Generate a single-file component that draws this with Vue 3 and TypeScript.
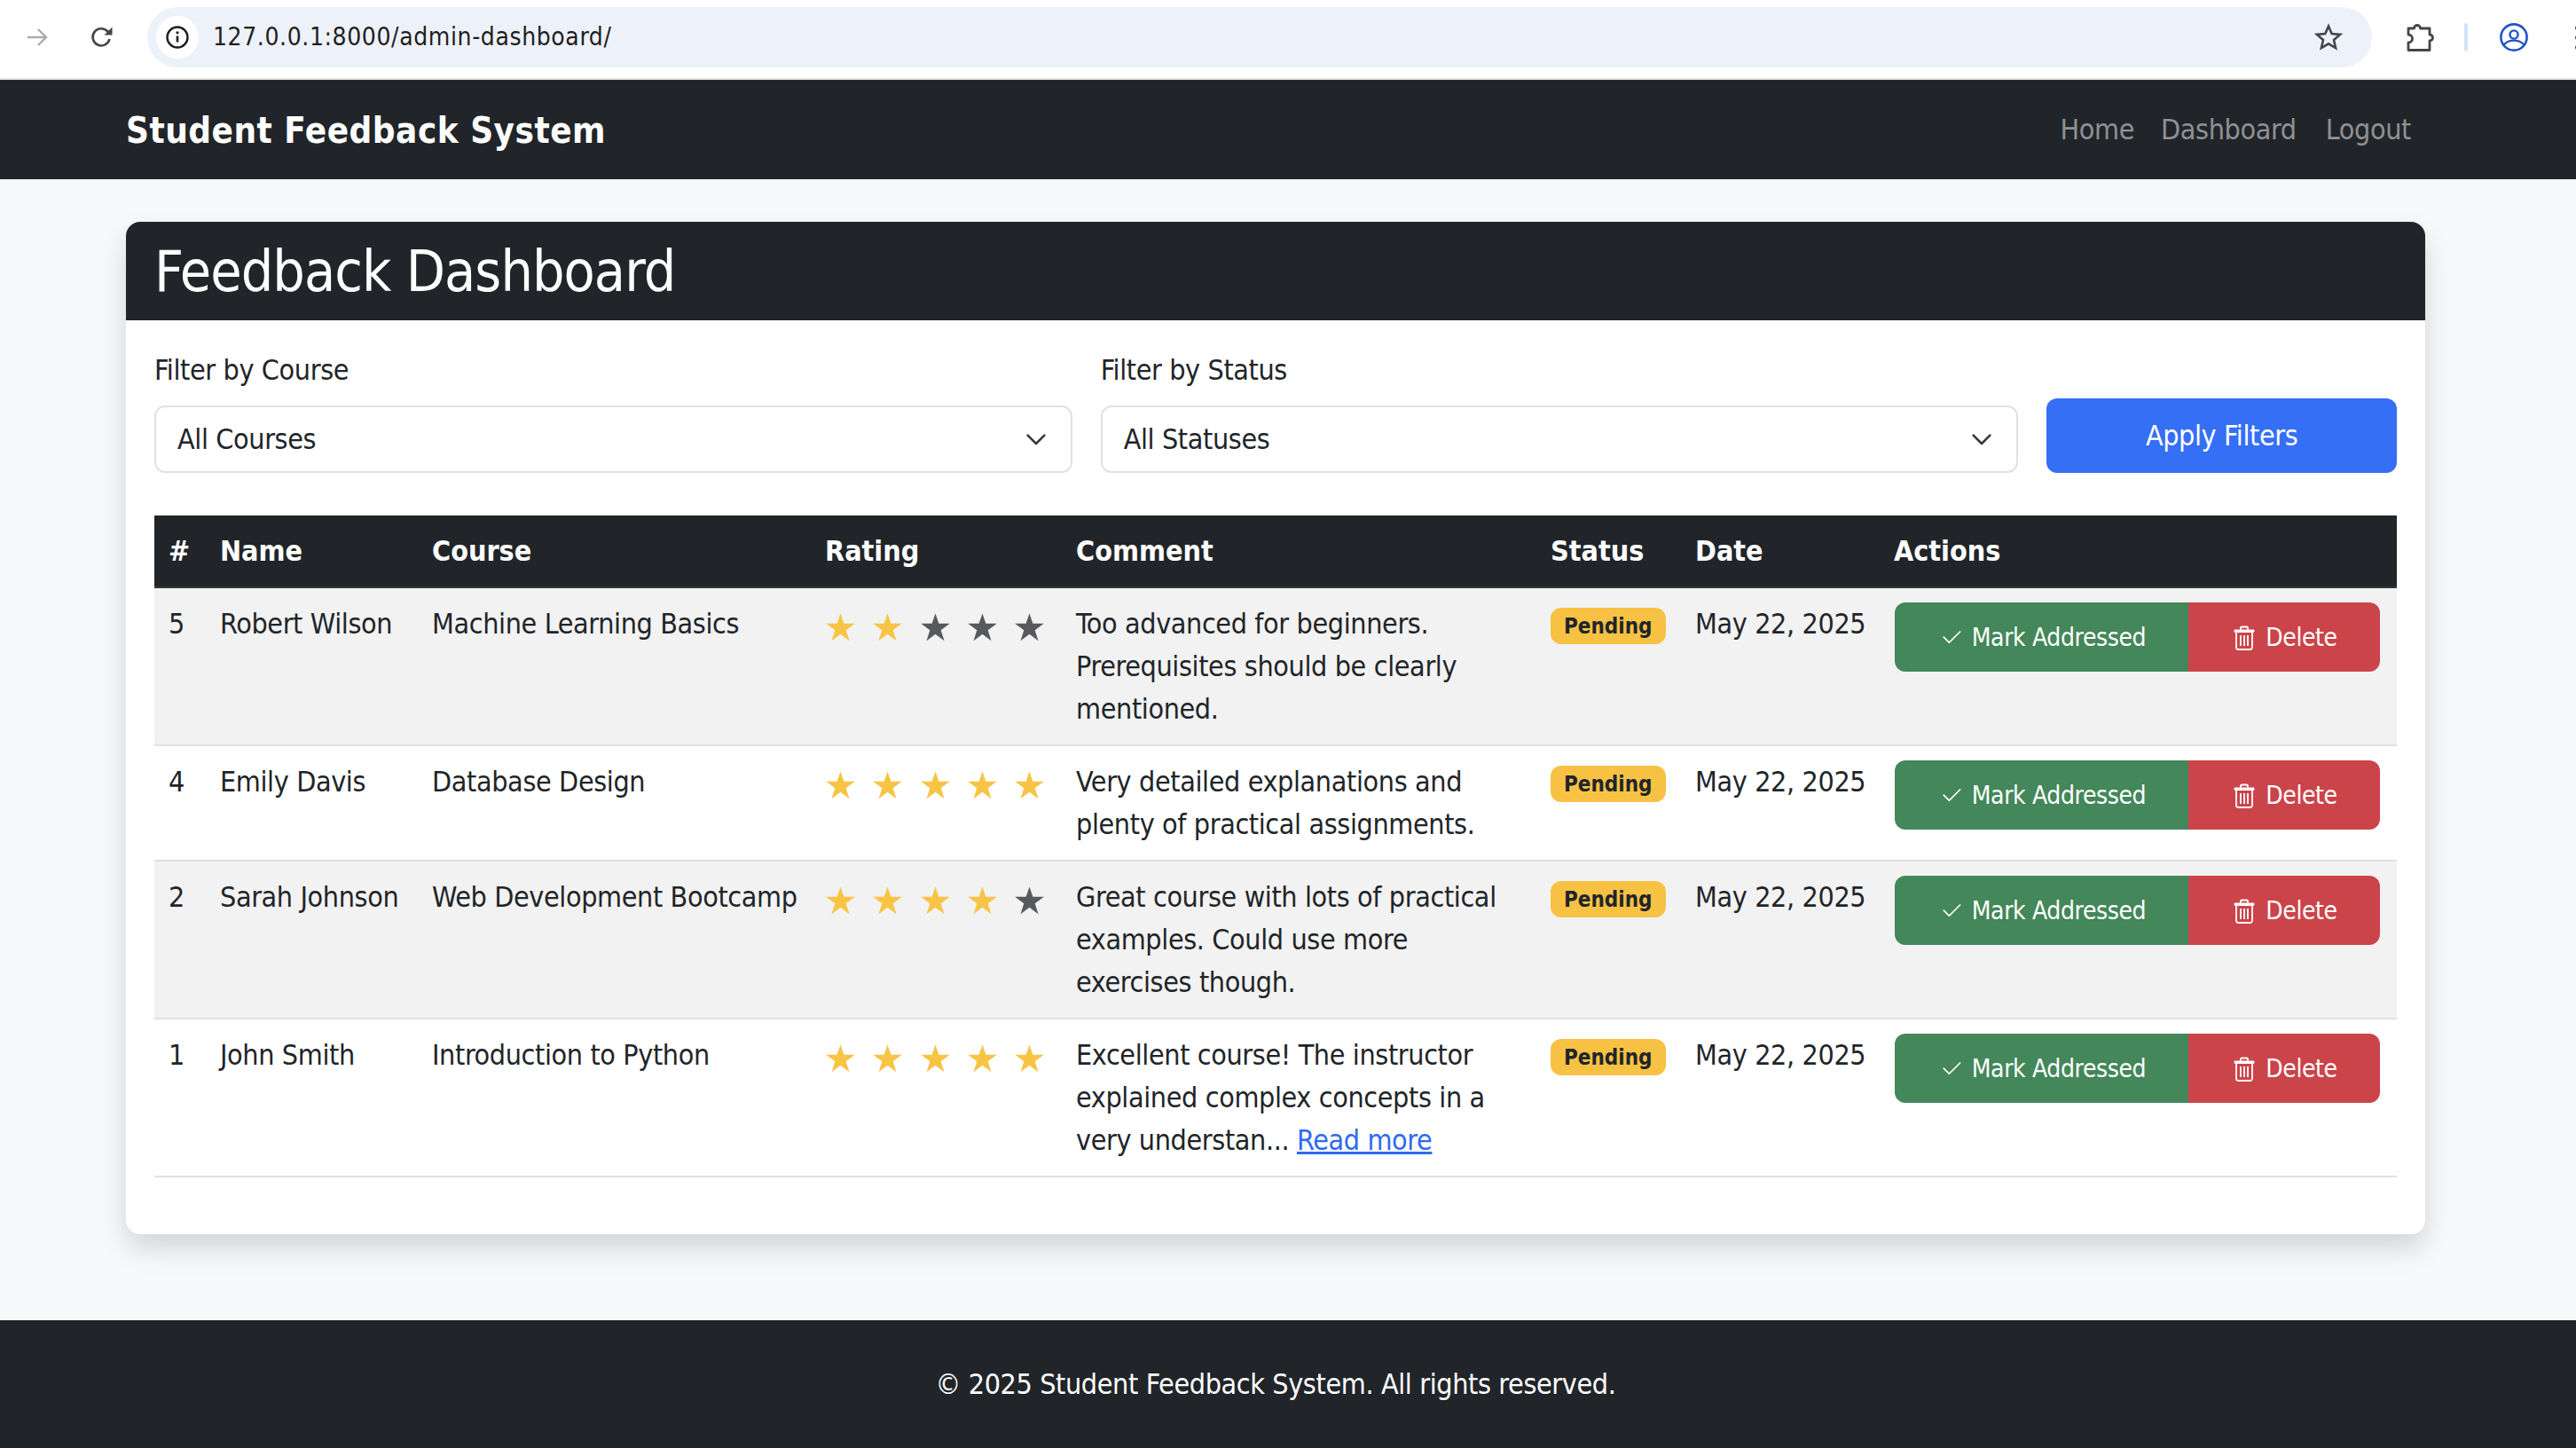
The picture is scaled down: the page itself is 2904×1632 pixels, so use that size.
<template>
  <div class="page">
    <div class="chrome">
      <svg class="chrome-icon back" width="24" height="24" viewBox="0 0 24 24"><path d="M1 12h21M13 3l9 9-9 9" fill="none" stroke="#aaacae" stroke-width="2.4" /></svg>
      <svg class="chrome-icon reload" width="26" height="26" viewBox="0 0 26 26"><path d="M21.5 15a9.6 9.6 0 1 1-2.2-8.6L23 9" fill="none" stroke="#444746" stroke-width="2.6" /><path d="M24.5 1.5V10.5H15.5Z" fill="#444746" /></svg>
      <div class="omnibox">
        <span class="info-pill">
          <svg width="28" height="28" viewBox="0 0 28 28"><circle cx="14" cy="14" r="11.5" fill="none" stroke="#1f1f1f" stroke-width="2.4" /><path d="M14 12.5v7" stroke="#1f1f1f" stroke-width="2.6" /><circle cx="14" cy="8.8" r="1.6" fill="#1f1f1f" /></svg>
        </span>
        <span class="url">127.0.0.1:8000/admin-dashboard/</span>
        <svg class="bookmark" width="32" height="32" viewBox="0 0 32 32"><path d="M16 3.5l3.7 8.6 9.3.8-7 6.1 2.1 9.1-8.1-4.8-8.1 4.8 2.1-9.1-7-6.1 9.3-.8z" fill="none" stroke="#444746" stroke-width="2.6" /></svg>
      </div>
      <svg class="puzzle" width="32" height="32" viewBox="0 0 32 32"><path d="M3 6h6.5a3.5 3.5 0 0 1 7 0H27v7a3.5 3.5 0 0 1 0 7v10.5H3V22a4.5 4.5 0 0 0 0-9z" fill="none" stroke="#444746" stroke-width="2.8" stroke-linejoin="round" /></svg>
      <span class="chrome-divider"></span>
      <svg class="profile" width="32" height="32" viewBox="0 0 32 32"><circle cx="16" cy="16" r="14.6" fill="none" stroke="#1f55c9" stroke-width="2.6" /><circle cx="16" cy="13" r="4.6" fill="none" stroke="#1f55c9" stroke-width="2.4" /><path d="M4.5 24.5c6-6.5 17-6.5 23 0" fill="none" stroke="#1f55c9" stroke-width="2.4" /></svg>
      <span class="menu-dots"><i></i><i></i><i></i></span>
    </div>

    <nav class="navbar">
      <a class="brand">Student Feedback System</a>
      <div class="nav-links">
        <a>Home</a>
        <a>Dashboard</a>
        <a>Logout</a>
      </div>
    </nav>

    <main class="main">
      <section class="card">
        <header class="card-header">
          <h1>Feedback Dashboard</h1>
        </header>
        <div class="card-body">
          <form class="filters" @submit.prevent>
            <div class="field">
              <label for="course">Filter by Course</label>
              <div class="select-wrap">
                <select id="course"><option>All Courses</option></select>
                <svg class="chevron" width="32" height="32" viewBox="0 0 16 16"><path d="m3.3 5.8 4.7 4.7 4.7-4.7" fill="none" stroke="#343a40" stroke-width="1.3" stroke-linecap="round" stroke-linejoin="round" /></svg>
              </div>
            </div>
            <div class="field">
              <label for="status">Filter by Status</label>
              <div class="select-wrap">
                <select id="status"><option>All Statuses</option></select>
                <svg class="chevron" width="32" height="32" viewBox="0 0 16 16"><path d="m3.3 5.8 4.7 4.7 4.7-4.7" fill="none" stroke="#343a40" stroke-width="1.3" stroke-linecap="round" stroke-linejoin="round" /></svg>
              </div>
            </div>
            <button class="apply" type="submit">Apply Filters</button>
          </form>

          <table class="feedback">
            <colgroup>
              <col v-for="w in colWidths" :key="w" :style="{ width: w + 'px' }" />
            </colgroup>
            <thead>
              <tr>
                <th>#</th>
                <th>Name</th>
                <th>Course</th>
                <th>Rating</th>
                <th>Comment</th>
                <th>Status</th>
                <th>Date</th>
                <th>Actions</th>
              </tr>
            </thead>
            <tbody>
              <tr v-for="row in rows" :key="row.id">
                <td>{{ row.id }}</td>
                <td class="nowrap">{{ row.name }}</td>
                <td class="nowrap">{{ row.course }}</td>
                <td>
                  <div class="stars">
                    <svg
                      v-for="n in 5"
                      :key="n"
                      :class="n <= row.rating ? 'on' : 'off'"
                      width="33"
                      height="32"
                      viewBox="0 0 33 32"
                    >
                      <polygon points="16.5,0.5 20.4,11.8 32.8,11.8 22.7,19.3 26.5,31.2 16.5,23.8 6.5,31.2 10.3,19.3 0.2,11.8 12.6,11.8" />
                    </svg>
                  </div>
                </td>
                <td>
                  {{ row.comment }}
                  <a v-if="row.more" class="more">Read more</a>
                </td>
                <td><span class="badge">Pending</span></td>
                <td class="nowrap">May 22, 2025</td>
                <td>
                  <div class="actions">
                    <button class="btn-mark" type="button">
                      <svg width="28" height="28" viewBox="0 0 16 16"><path d="M13.854 3.646a.5.5 0 0 1 0 .708l-7 7a.5.5 0 0 1-.708 0l-3.5-3.5a.5.5 0 1 1 .708-.708L6.5 10.293l6.646-6.647a.5.5 0 0 1 .708 0z" fill="currentColor" /></svg>
                      Mark Addressed
                    </button>
                    <button class="btn-delete" type="button">
                      <svg width="24" height="28" viewBox="0 0 24 28"><path d="M8 4.5V3a1.5 1.5 0 0 1 1.5-1.5h5A1.5 1.5 0 0 1 16 3v1.5" fill="none" stroke="currentColor" stroke-width="2" /><rect x="0.5" y="4.5" width="23" height="3.4" rx="1.4" fill="currentColor" /><path d="M3 7v17.5A2.5 2.5 0 0 0 5.5 27h13a2.5 2.5 0 0 0 2.5-2.5V7M8 11v12M12 11v12M16 11v12" fill="none" stroke="currentColor" stroke-width="1.8" /></svg>
                      Delete
                    </button>
                  </div>
                </td>
              </tr>
            </tbody>
          </table>
        </div>
      </section>
    </main>

    <footer class="footer">© 2025 Student Feedback System. All rights reserved.</footer>
  </div>
</template>

<script setup lang="ts">
interface FeedbackRow {
  id: number;
  name: string;
  course: string;
  rating: number;
  comment: string;
  more?: boolean;
}

const colWidths: number[] = [58, 239, 443, 283, 535, 163, 224, 583];

const rows: FeedbackRow[] = [
  {
    id: 5,
    name: "Robert Wilson",
    course: "Machine Learning Basics",
    rating: 2,
    comment: "Too advanced for beginners. Prerequisites should be clearly mentioned.",
  },
  {
    id: 4,
    name: "Emily Davis",
    course: "Database Design",
    rating: 5,
    comment: "Very detailed explanations and plenty of practical assignments.",
  },
  {
    id: 2,
    name: "Sarah Johnson",
    course: "Web Development Bootcamp",
    rating: 4,
    comment: "Great course with lots of practical examples. Could use more exercises though.",
  },
  {
    id: 1,
    name: "John Smith",
    course: "Introduction to Python",
    rating: 5,
    comment: "Excellent course! The instructor explained complex concepts in a very understan...",
    more: true,
  },
];
</script>

<style>
html,
body {
  margin: 0;
  background: #f8f9fa;
}
</style>

<style scoped>
.page {
  min-height: 1632px;
  display: flex;
  flex-direction: column;
  font-family: "DejaVu Sans", sans-serif;
  font-stretch: condensed;
  font-size: 32px;
  line-height: 48px;
  letter-spacing: -0.38px;
  color: #212529;
  background: #f8f9fa;
}

.chrome {
  height: 84px;
  padding: 0 0 4px 30px;
  background: #fff;
  border-bottom: 2px solid #e3e3e3;
  display: flex;
  align-items: center;
  overflow: hidden;
}

.chrome > * {
  flex: none;
}

.chrome-icon.reload {
  margin-left: 48px;
}

.omnibox {
  margin-left: 38px;
  width: 2508px;
  height: 68px;
  border-radius: 34px;
  background: #edf2fa;
  display: flex;
  align-items: center;
  padding: 0 33px 0 10px;
  box-sizing: border-box;
}

.info-pill {
  width: 48px;
  height: 48px;
  border-radius: 50%;
  background: #fff;
  display: flex;
  align-items: center;
  justify-content: center;
}

.url {
  margin-left: 16px;
  font-size: 28px;
  letter-spacing: 0.6px;
  color: #1f1f1f;
  flex: 1;
}

.puzzle {
  margin-left: 38px;
}

.chrome-divider {
  width: 4px;
  height: 32px;
  border-radius: 2px;
  background: #d3e3fd;
  margin-left: 34px;
}

.profile {
  margin-left: 36px;
}

.menu-dots {
  margin-left: 53px;
  display: flex;
  flex-direction: column;
  gap: 6px;
}

.menu-dots i {
  width: 5px;
  height: 5px;
  border-radius: 50%;
  background: #444746;
}

.navbar {
  height: 112px;
  background: #212529;
  display: flex;
  align-items: center;
  justify-content: space-between;
  padding: 0 186px 0 142px;
}

.brand {
  font-size: 40px;
  font-weight: 700;
  letter-spacing: 0.5px;
  color: #fff;
  padding-top: 2px;
}

.nav-links {
  display: flex;
  gap: 33px;
  color: #8f9194;
}

.nav-links a:first-child {
  margin-right: -3px;
}

.main {
  flex: 1;
  padding: 48px 170px 96px 142px;
}

.card {
  background: #fff;
  border-radius: 16px;
  box-shadow: 0 16px 32px rgba(0, 0, 0, 0.15);
}

.card-header {
  background: #212529;
  border-radius: 16px 16px 0 0;
  padding: 17px 32px 15px;
  color: #fff;
}

.card-header h1 {
  margin: 0;
  font-size: 64px;
  font-weight: 400;
  line-height: 79px;
  letter-spacing: -0.95px;
}

.card-body {
  padding: 32px 32px 64px;
}

.filters {
  display: grid;
  grid-template-columns: repeat(12, 1fr);
  gap: 32px;
  align-items: end;
  margin-bottom: 48px;
}

.field {
  grid-column: span 5;
}

.field label {
  display: block;
  margin-bottom: 16px;
}

.select-wrap {
  position: relative;
}

.select-wrap select {
  display: block;
  width: 100%;
  height: 76px;
  box-sizing: border-box;
  appearance: none;
  border: 2px solid #dee2e6;
  border-radius: 12px;
  background: #fff;
  padding: 0 24px;
  font: inherit;
  letter-spacing: inherit;
  color: #212529;
}

.chevron {
  position: absolute;
  right: 25px;
  top: 22px;
}

.apply {
  grid-column: span 2;
  height: 84px;
  border: none;
  border-radius: 12px;
  background: #356ff5;
  color: #fff;
  font: inherit;
  letter-spacing: inherit;
}

.feedback {
  width: 2528px;
  table-layout: fixed;
  border-collapse: collapse;
}

.feedback th {
  background: #212529;
  color: #fff;
  font-weight: 700;
  letter-spacing: 0;
  text-align: left;
  padding: 16px;
  border-bottom: 2px solid #32373b;
}

.feedback td {
  padding: 16px;
  vertical-align: top;
  border-bottom: 2px solid #dee2e6;
}

.feedback tbody tr:nth-child(odd) td {
  background: #f2f2f2;
}

.nowrap {
  white-space: nowrap;
}

.stars {
  display: flex;
  gap: 20.25px;
  margin: 12px 0 0 1px;
}

.stars .on {
  fill: #f8c445;
}

.stars .off {
  fill: #58595d;
}

.more {
  color: #2f6bf0;
  text-decoration: underline;
}

.badge {
  display: inline-block;
  margin-top: 6px;
  padding: 0 15px;
  height: 41px;
  line-height: 43px;
  border-radius: 12px;
  background: #f7c244;
  color: #212529;
  font-size: 24px;
  font-weight: 700;
  letter-spacing: 0;
  vertical-align: top;
}

.actions {
  display: flex;
  margin-left: 1px;
}

.actions button {
  height: 78px;
  border: none;
  color: #fff;
  font: inherit;
  font-size: 28px;
  letter-spacing: inherit;
  display: flex;
  align-items: center;
  justify-content: center;
}

.btn-mark {
  width: 331px;
  gap: 9px;
  padding: 2px 0 0 2px;
  background: #43875a;
  border-radius: 12px 0 0 12px;
}

.btn-delete {
  width: 216px;
  gap: 12px;
  padding: 2px 0 0 3px;
  background: #cb444a;
  border-radius: 0 12px 12px 0;
}

.footer {
  background: #212529;
  color: #fff;
  text-align: center;
  padding: 48px 28px 48px 0;
}
</style>
